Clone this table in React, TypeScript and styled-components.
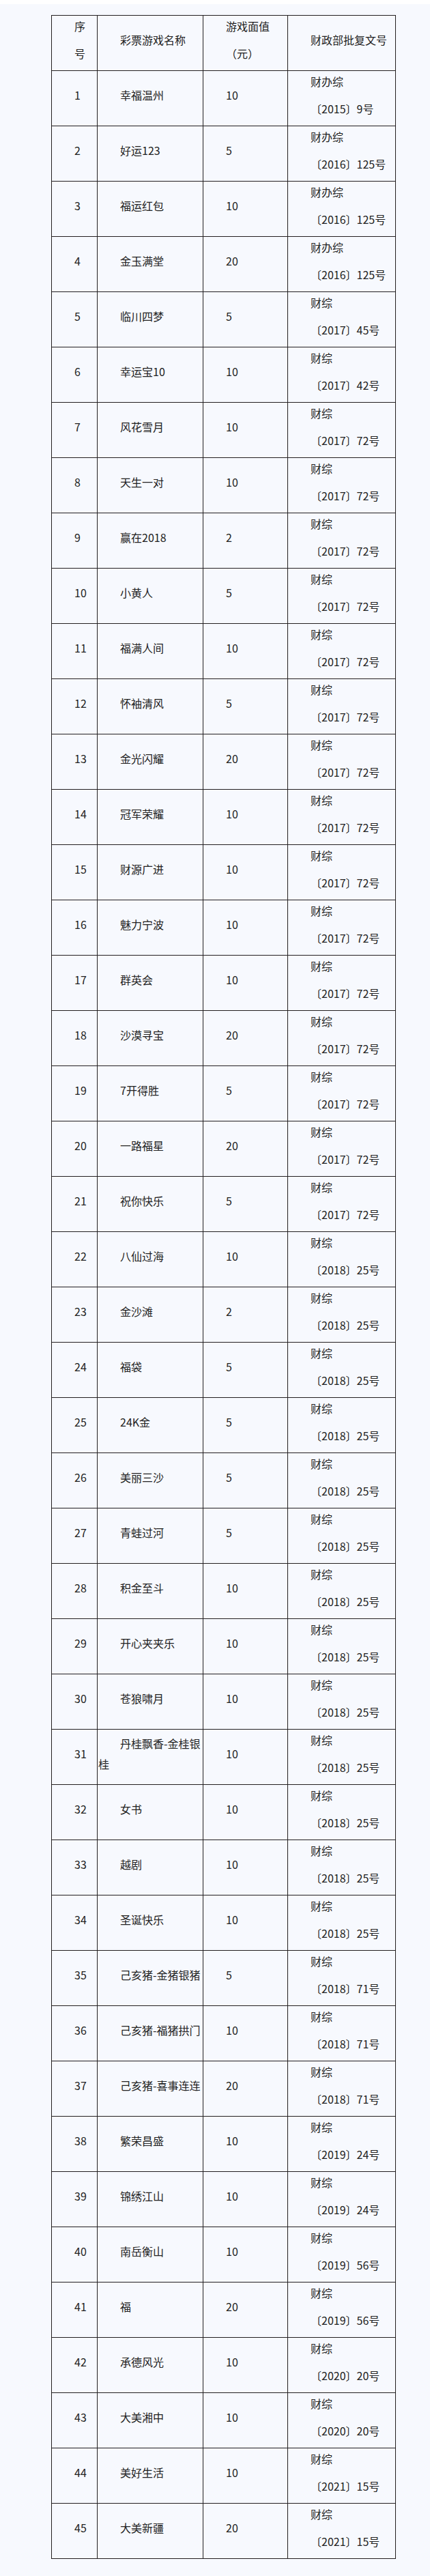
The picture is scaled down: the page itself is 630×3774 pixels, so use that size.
import React from 'react';
import styled, { createGlobalStyle } from 'styled-components';

const GlobalStyle = createGlobalStyle`
  body {
    margin: 0;
    background: #ffffff;
    font-family: "Noto Sans CJK SC", "Noto Sans", sans-serif;
  }
`;

// Light panel under the white strip at the top
const Page = styled.div`
  margin-top: 6px;
  background: #f7f9fe;
  padding: 16px 0 26px 75px;
`;

const Table = styled.table`
  border-collapse: collapse;
  table-layout: fixed;
  width: 505px;
  color: #222222;
  font-size: 16px;
`;

const Cell = styled.td`
  border: 1px solid #231f20;
  padding: 0 1px;
  height: 80px;
  vertical-align: middle;
  word-break: normal;
`;

const Para = styled.p`
  margin: 0 0 10px;
  line-height: 30px;
  text-indent: 2em;
`;

type Row = {
  no: number;
  name: string;
  value: number;
  office: string;
  ref: string;
};

const raw: [string, number, string, string][] = [
  ['幸福温州', 10, '财办综', '〔2015〕9号'],
  ['好运123', 5, '财办综', '〔2016〕125号'],
  ['福运红包', 10, '财办综', '〔2016〕125号'],
  ['金玉满堂', 20, '财办综', '〔2016〕125号'],
  ['临川四梦', 5, '财综', '〔2017〕45号'],
  ['幸运宝10', 10, '财综', '〔2017〕42号'],
  ['风花雪月', 10, '财综', '〔2017〕72号'],
  ['天生一对', 10, '财综', '〔2017〕72号'],
  ['赢在2018', 2, '财综', '〔2017〕72号'],
  ['小黄人', 5, '财综', '〔2017〕72号'],
  ['福满人间', 10, '财综', '〔2017〕72号'],
  ['怀袖清风', 5, '财综', '〔2017〕72号'],
  ['金光闪耀', 20, '财综', '〔2017〕72号'],
  ['冠军荣耀', 10, '财综', '〔2017〕72号'],
  ['财源广进', 10, '财综', '〔2017〕72号'],
  ['魅力宁波', 10, '财综', '〔2017〕72号'],
  ['群英会', 10, '财综', '〔2017〕72号'],
  ['沙漠寻宝', 20, '财综', '〔2017〕72号'],
  ['7开得胜', 5, '财综', '〔2017〕72号'],
  ['一路福星', 20, '财综', '〔2017〕72号'],
  ['祝你快乐', 5, '财综', '〔2017〕72号'],
  ['八仙过海', 10, '财综', '〔2018〕25号'],
  ['金沙滩', 2, '财综', '〔2018〕25号'],
  ['福袋', 5, '财综', '〔2018〕25号'],
  ['24K金', 5, '财综', '〔2018〕25号'],
  ['美丽三沙', 5, '财综', '〔2018〕25号'],
  ['青蛙过河', 5, '财综', '〔2018〕25号'],
  ['积金至斗', 10, '财综', '〔2018〕25号'],
  ['开心夹夹乐', 10, '财综', '〔2018〕25号'],
  ['苍狼啸月', 10, '财综', '〔2018〕25号'],
  ['丹桂飘香-金桂银桂', 10, '财综', '〔2018〕25号'],
  ['女书', 10, '财综', '〔2018〕25号'],
  ['越剧', 10, '财综', '〔2018〕25号'],
  ['圣诞快乐', 10, '财综', '〔2018〕25号'],
  ['己亥猪-金猪银猪', 5, '财综', '〔2018〕71号'],
  ['己亥猪-福猪拱门', 10, '财综', '〔2018〕71号'],
  ['己亥猪-喜事连连', 20, '财综', '〔2018〕71号'],
  ['繁荣昌盛', 10, '财综', '〔2019〕24号'],
  ['锦绣江山', 10, '财综', '〔2019〕24号'],
  ['南岳衡山', 10, '财综', '〔2019〕56号'],
  ['福', 20, '财综', '〔2019〕56号'],
  ['承德风光', 10, '财综', '〔2020〕20号'],
  ['大美湘中', 10, '财综', '〔2020〕20号'],
  ['美好生活', 10, '财综', '〔2021〕15号'],
  ['大美新疆', 20, '财综', '〔2021〕15号'],
];

const rows: Row[] = raw.map(([name, value, office, ref], i) => ({
  no: i + 1,
  name,
  value,
  office,
  ref,
}));

const App: React.FC = () => {
  return (
    <>
      <GlobalStyle />
      <Page>
        <Table>
          <colgroup>
            <col style={{ width: 67 }} />
            <col style={{ width: 155 }} />
            <col style={{ width: 124 }} />
            <col style={{ width: 158 }} />
          </colgroup>
          <tbody>
            <tr>
              <Cell>
                <Para>序</Para>
                <Para>号</Para>
              </Cell>
              <Cell>
                <Para>彩票游戏名称</Para>
              </Cell>
              <Cell>
                <Para>游戏面值</Para>
                <Para>（元）</Para>
              </Cell>
              <Cell>
                <Para>财政部批复文号</Para>
              </Cell>
            </tr>
            {rows.map(r => (
              <tr key={r.no}>
                <Cell>
                  <Para>{r.no}</Para>
                </Cell>
                <Cell>
                  <Para>{r.name}</Para>
                </Cell>
                <Cell>
                  <Para>{r.value}</Para>
                </Cell>
                <Cell>
                  <Para>{r.office}</Para>
                  <Para>{r.ref}</Para>
                </Cell>
              </tr>
            ))}
          </tbody>
        </Table>
      </Page>
    </>
  );
};

export default App;
